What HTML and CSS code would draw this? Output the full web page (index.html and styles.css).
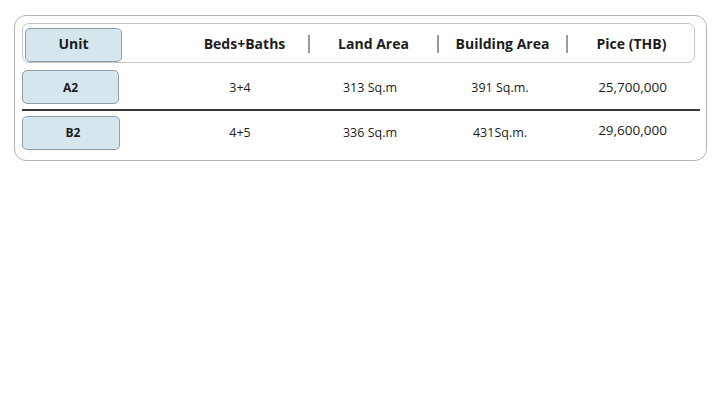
FILE: index.html
```html
<!DOCTYPE html>
<html>
<head>
<meta charset="utf-8">
<link rel="stylesheet" href="styles.css">
</head>
<body>
<div class="card">
  <div class="head">
    <div class="unit-btn head-btn">Unit</div>
    <div class="hcell">Beds+Baths</div>
    <div class="hcell sep">Land Area</div>
    <div class="hcell sep">Building Area</div>
    <div class="hcell sep">Pice (THB)</div>
  </div>
  <div class="row row1">
    <div class="unit-btn row-btn">A2</div>
    <div class="cell">3+4</div>
    <div class="cell">313 Sq.m</div>
    <div class="cell">391 Sq.m.</div>
    <div class="cell price">25,700,000</div>
  </div>
  <div class="divider"></div>
  <div class="row row2">
    <div class="unit-btn row-btn b2">B2</div>
    <div class="cell">4+5</div>
    <div class="cell">336 Sq.m</div>
    <div class="cell">431Sq.m.</div>
    <div class="cell price up">29,600,000</div>
  </div>
</div>
</body>
</html>
```
FILE: styles.css
```css
* { box-sizing: border-box; }
body {
  margin: 0;
  background: #fff;
  font-family: "Open Sans", "Liberation Sans", sans-serif;
  color: #1c1c1c;
}
.card {
  margin: 15px 0 0 14px;
  width: 693px;
  height: 146px;
  border: 1px solid #b4b4b4;
  border-radius: 12px;
  padding: 7px 0 0 7px;
}
.head {
  width: 673px;
  height: 40px;
  border: 1px solid #c4c4c4;
  border-radius: 7px;
  padding: 3px 0 0 2px;
  display: grid;
  grid-template-columns: 97px 58px 129px 129px 129px 129px;
  align-items: center;
}
.head .unit-btn { grid-column: 1; }
.hcell {
  font-weight: 700;
  font-size: 14px;
  text-align: center;
  position: relative;
  height: 34px;
  line-height: 32px;
}
.head .hcell:nth-child(2) { grid-column: 3; }
.sep::before {
  content: "";
  position: absolute;
  left: -1px;
  top: 7px;
  width: 2px;
  height: 18px;
  background: #9a9a9a;
}
.unit-btn {
  width: 97px;
  height: 34px;
  background: #d5e7ed;
  border: 1px solid #8c9fa5;
  border-radius: 5px;
  display: flex;
  align-items: center;
  justify-content: center;
  font-weight: 700;
}
.head-btn { font-size: 14px; padding-bottom: 2px; }
.row-btn { font-size: 12px; }
.b2 { width: 98px; padding-left: 4px; }
.row {
  display: grid;
  grid-template-columns: 97px 56px 130px 130px 130px 135px;
  align-items: center;
  height: 34px;
}
.row1 { margin-top: 7px; }
.row .cell:nth-child(2) { grid-column: 3; }
.cell {
  font-size: 12.5px;
  text-align: center;
}
.price { font-size: 13.5px; }
.up { position: relative; top: -3px; }
.divider {
  width: 678px;
  height: 1.5px;
  background: #3a3a3a;
  margin: 5px 0 5px 0;
}
```
